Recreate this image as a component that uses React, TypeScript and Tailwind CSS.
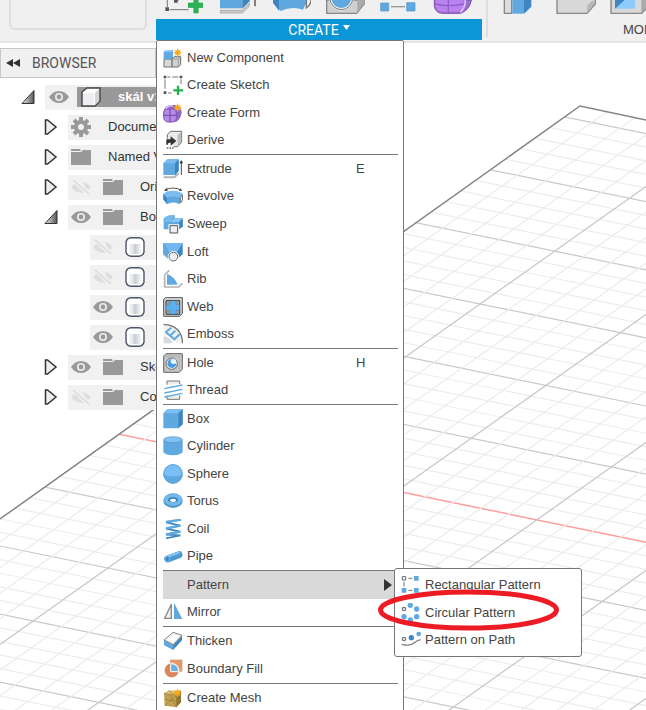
import type { ReactNode } from "react";

const outline = "#6f6f6f";
const blue = "#5fa9e0";
const deep = "#3d86c2";
const light = "#8ccbfa";

/* ---------- menu icons, drawn on a 60 unit grid ---------- */

function Icon({ children }: { children?: ReactNode }) {
  return (
    <svg className="size-5 shrink-0" viewBox="0 0 60 60" fill="none" aria-hidden="true">
      {children}
    </svg>
  );
}

function Spark({ x, y }: { x: number; y: number }) {
  return (
    <path
      transform={`translate(${x} ${y})`}
      d="M0-14 3-6 10-10 6-3 14 0 6 3 10 10 3 6 0 14-3 6-10 10-6 3-14 0-6-3-10-10-3-6Z"
      fill="#fba91a"
    />
  );
}

const icons: Record<string, ReactNode> = {
  component: (
    <>
      <path d="M3 33h24v24H3Z" fill="#d9d9d9" stroke={outline} strokeWidth="3" />
      <path d="M27 33 34 26h19v24l-7 7H27Z" fill="#d0d0d0" stroke={outline} strokeWidth="3" />
      <path d="M27 33h19v24M46 33l7-7" stroke="#8d8d8d" strokeWidth="2" />
      <path d="M2 12 8 6h22v22l-5 6H2Z" fill={blue} />
      <path d="M2 12 8 6h22l-5 6Z" fill={light} />
      <Spark x={44} y={14} />
    </>
  ),
  sketch: (
    <>
      <path d="M13 6h9m6 0h18M6 13v28M54 13v14M15 54h11" stroke="#777" strokeWidth="3" />
      <path d="M2 2h8v8H2zM50 2h8v8h-8zM2 49h8v8H2z" fill="#555" />
      <path d="M45 32v28M31 46h29" stroke="#22b14c" strokeWidth="7" />
    </>
  ),
  form: (
    <>
      <path d="M2 25Q4 9 22 6h14q20 6 20 22-2 20-16 28l-24 2Q2 52 2 40Z" fill="#8d68c4" />
      <path d="M2 28Q4 18 18 18h12q10 0 10 12v14q0 13-13 13H16Q2 56 2 42Z" fill="#b88be8" stroke="#8055b5" strokeWidth="3" />
      <path d="M21 18v39M2 37h38" stroke="#7d50b4" strokeWidth="4" />
      <path d="M8 17q8-11 22-8" stroke="#d9baf8" strokeWidth="5" />
      <Spark x={44} y={14} />
    </>
  ),
  derive: (
    <>
      <path d="M13 26V14L22 4h34v32L44 50H32" fill="#e9e9e9" stroke={outline} strokeWidth="3" />
      <path d="M44 15 55 5v31L44 49Z" fill="#bdbdbd" />
      <path d="M10 44V28h13v-9l17 14-17 14v-9h-5q-3 0-3 6Z" fill="#333" />
      <path d="M11 54h24" stroke="#666" strokeWidth="4" strokeDasharray="5 3" />
    </>
  ),
  extrude: (
    <>
      <path d="M2 55h32l13-12" stroke="#b5b5b5" strokeWidth="6" />
      <path d="M1 13 13 1h34v35L36 48H1Z" fill={blue} />
      <path d="M1 13 13 1h34L36 13Z" fill="#79baf0" />
      <path d="M36 13 47 1v35L36 48Z" fill={deep} />
      <path d="M55 48V6" stroke="#444" strokeWidth="3" />
      <path d="m49 13 6-10 5 10Z" fill="#333" />
    </>
  ),
  revolve: (
    <>
      <path d="M7 11Q30 1 55 12" stroke="#555" strokeWidth="3" />
      <path d="m3 14 9-9 2 11ZM58 15l-11-1 5-7Z" fill="#444" />
      <path d="M1 23Q29 6 59 23v17L47 54Q30 45 12 55L1 40Z" fill={blue} />
      <path d="M1 23Q29 6 59 23l-9 12q-20-9-39 0Z" fill="#7cbdf1" />
      <path d="m1 24 11 12v18L1 40Z" fill={deep} />
      <path d="M52 34q6-8 7-5v12q-4 8-8 11Z" fill="#eee" stroke="#666" strokeWidth="3" />
    </>
  ),
  sweep: (
    <>
      <path d="M2 14Q11 1 35 4l1 9h23v25L48 46H2Z" fill={blue} />
      <path d="M2 14Q11 1 35 4l-8 12-4 8H2Z" fill="#77b9ed" />
      <path d="M48 23 59 13v25l-11 8Z" fill={deep} />
      <path d="M23 24 35 13h24L48 24Z" fill="#8bc7f5" />
      <path d="M20 34h25v24H20Z" fill="#f3f3f3" stroke="#fff" strokeWidth="7" />
      <path d="M21 35h23v22H21Z" fill="#eee" stroke="#555" strokeWidth="3" />
    </>
  ),
  loft: (
    <>
      <path d="M1 3h58v34L44 50H15L1 37Z" fill={deep} />
      <path d="M1 3h58L43 30H17Z" fill="#72b7ef" />
      <path d="M1 3 17 30l-3 18L1 37Z" fill={blue} />
      <circle cx="31" cy="44" r="17" fill="#fff" />
      <circle cx="31" cy="44" r="13" fill="#f0f0f0" stroke="#666" strokeWidth="3" />
    </>
  ),
  rib: (
    <>
      <path d="M5 17 19 4M5 17v37h42l11-11" stroke="#b4b4b4" strokeWidth="5" />
      <path d="M12 14Q34 22 44 47H12Z" fill={blue} />
    </>
  ),
  web: (
    <>
      <path d="M2 7 8 1h50v48l-8 9H2Z" fill="#ccc" stroke="#555" strokeWidth="3" />
      <path d="M9 11h41v41H9Z" fill="#8ca6b8" stroke="#444" strokeWidth="3" />
      <path d="M23 12h13v13h13v13H36v13H23V38H10V25h13Z" fill="#58b0f0" />
      <path d="M20 14v8h-8m27-8v8h8M20 49v-8h-8m27 8v-8h8" stroke="#5d7f96" strokeWidth="2" />
    </>
  ),
  emboss: (
    <>
      <path d="M1 2Q55 5 59 58H41Q37 35 2 34Z" fill="#f1f1f1" />
      <path d="M1 1Q56 4 59 58" stroke="#777" strokeWidth="4" />
      <path d="m8 24 26 22 16-15M21 35l16-15M8 25l17-14" stroke={blue} strokeWidth="6" />
      <path d="M2 36q20 2 27 22H2Z" fill="#d9d9d9" />
    </>
  ),
  hole: (
    <>
      <path d="M2 9 9 2h49v46l-9 10H2Z" fill="#c4c4c4" stroke="#666" strokeWidth="3" />
      <path d="M2 9h47v49M49 9l9-7" stroke="#aaa" strokeWidth="2" />
      <circle cx="26" cy="32" r="17" fill="#f6f6f6" stroke="#666" strokeWidth="3" />
      <path d="M13 31a13 13 0 0 1 13-13l1 13 13 1A13 13 0 0 1 13 31Z" fill="#4a9de0" />
      <circle cx="31" cy="25" r="8" fill="#e2f2ff" />
    </>
  ),
  thread: (
    <>
      <path d="M12 14V3h38v9M12 47v11h38V46" fill="#eee" stroke="#777" strokeWidth="3" />
      <path d="m4 26 54-11M4 39l54-11M4 51l54-11" stroke={blue} strokeWidth="4" />
    </>
  ),
  box: (
    <>
      <path d="M1 13 13 1h46v45L46 58H1Z" fill={blue} />
      <path d="M1 13 13 1h46L46 13Z" fill="#7bbef2" />
      <path d="M46 13 59 1v45L46 58Z" fill={deep} />
    </>
  ),
  cylinder: (
    <>
      <path d="M1 11h58v37q-8 10-29 10T1 48Z" fill={blue} />
      <ellipse cx="30" cy="11" rx="28" ry="9" fill="#82c1f1" stroke="#5199d2" strokeWidth="2" />
    </>
  ),
  sphere: (
    <>
      <circle cx="30" cy="30" r="29" fill={blue} />
      <path d="M1 30a29 29 0 0 1 58 0Q30 45 1 30Z" fill="#7abff5" />
      <circle cx="30" cy="30" r="28" stroke="#4f9cd6" strokeWidth="2" />
    </>
  ),
  torus: (
    <>
      <ellipse cx="30" cy="29" rx="29" ry="22" fill="#4b97d1" />
      <ellipse cx="30" cy="26" rx="27" ry="18" fill="#75b9eb" />
      <ellipse cx="30" cy="26" rx="15" ry="8" fill={deep} />
      <ellipse cx="30" cy="28" rx="9" ry="5" fill="#fff" />
    </>
  ),
  coil: (
    <>
      <path d="M54 2 9 10l43 10L9 29l43 9L9 47l43 2-43 9" stroke="#3d86c2" strokeWidth="5" />
      <path d="M54 2 9 9M52 20 9 28M52 38 9 46" stroke={blue} strokeWidth="7" />
    </>
  ),
  pipe: (
    <>
      <path d="M14 39 48 26" stroke="#4b97d1" strokeWidth="21" strokeLinecap="round" />
      <path d="M16 31 47 20" stroke="#80c1f2" strokeWidth="8" strokeLinecap="round" />
      <ellipse cx="13" cy="39" rx="7" ry="8" fill={deep} stroke="#77b9e9" strokeWidth="3" />
    </>
  ),
  mirror: (
    <>
      <path d="M25 7v42H5Z" fill="#eee" stroke="#888" strokeWidth="4" />
      <path d="M33 2v49h25Z" fill={blue} />
    </>
  ),
  thicken: (
    <>
      <path d="M3 27v15l28 14 26-28V13L31 40Z" fill={deep} />
      <path d="M3 27v15l28 14V40Z" fill={blue} />
      <path d="M3 27 30 4l27 9-26 28Z" fill="#eee" stroke="#888" strokeWidth="3" />
      <path d="m12 27 19-17 16 5-17 19Z" fill="#fff" />
    </>
  ),
  boundary: (
    <>
      <path d="M21 2h37v36H21Z" fill="#e39768" />
      <circle cx="26" cy="34" r="22" fill="#d98558" stroke="#fff" strokeWidth="2" />
      <path d="M23 14q23 0 24 24H23Z" fill="#68afe2" stroke="#fff" strokeWidth="3" />
    </>
  ),
  mesh: (
    <>
      <path d="M3 16 16 8h38v34L40 58l-35-5Z" fill="#c1a252" />
      <path d="M3 16 16 8h38L40 23Z" fill="#dcc276" />
      <path d="M40 23 54 8v34L40 58Z" fill="#8e7430" />
      <path d="m3 16 37 7-35 30M4 34l36 6M20 19 40 58M16 8l24 15 13 13-13 4" stroke="#927836" strokeWidth="2" />
      <Spark x={43} y={15} />
    </>
  ),
  rectangular: (
    <>
      <path d="M22 10h12M22 46h12M9 20v15" stroke="#777" strokeWidth="3" />
      <path d="M4 5h10v10H4Z" fill="#fff" stroke="#666" strokeWidth="3" />
      <path d="M39 3h14v14H39zM2 39h14v14H2zM39 39h14v14H39z" fill={blue} />
    </>
  ),
  circular: (
    <>
      <circle cx="9" cy="18" r="5" fill="#fff" stroke="#777" strokeWidth="4" />
      <g fill={blue}>
        <circle cx="28" cy="7" r="8" />
        <circle cx="47" cy="18" r="8" />
        <circle cx="47" cy="41" r="8" />
        <circle cx="28" cy="51" r="8" />
        <circle cx="9" cy="41" r="8" />
      </g>
    </>
  ),
  path: (
    <>
      <circle cx="9" cy="27" r="5" fill="#fff" stroke="#777" strokeWidth="4" />
      <circle cx="31" cy="23" r="8" fill={deep} />
      <circle cx="53" cy="12" r="7" fill={blue} />
      <path d="M2 43q26 7 40-6 7-6 17-8" stroke="#888" strokeWidth="4" />
    </>
  ),
};

/* ---------- toolbar icons: only their lower edge shows ---------- */

const createTools: { name: string; art: ReactNode }[] = [
  {
    name: "Create Sketch",
    art: (
      <>
        <path d="M13 0v21M20 29h57M36 4 47 0" stroke="#777" strokeWidth="3" />
        <path d="M7 22h11v11H7zM33 0h11v8H33z" fill="#555" />
        <path d="M99 0v40M75 16h51" stroke="#1fa04a" strokeWidth="15" />
        <path d="M99 0v38M77 16h47" stroke="#2cb556" strokeWidth="11" />
      </>
    ),
  },
  {
    name: "Extrude",
    art: (
      <>
        <path d="M10 31h66l21-22v10L76 39H10Z" fill="#ccc" stroke="#999" strokeWidth="2" />
        <path d="M9 0h67v25H9Z" fill={blue} />
        <path d="M76 0h22v4L76 26Z" fill={deep} />
        <path d="M114 0v19" stroke="#444" strokeWidth="4" />
      </>
    ),
  },
  {
    name: "Revolve",
    art: (
      <>
        <path d="M6 0h100v8L96 29Q64 17 28 33L6 8Z" fill={blue} />
        <path d="M6 0h18v32L6 8Z" fill={deep} />
        <path d="M106 0v24q14-10 14-24" fill="#eee" stroke="#777" strokeWidth="4" />
      </>
    ),
  },
  {
    name: "Hole",
    art: (
      <>
        <path d="M5 0v40h90l25-31V0Z" fill="#cfcfcf" stroke="#888" strokeWidth="4" />
        <path d="M97 0h22v8L97 38Z" fill="#aaa" />
        <circle cx="49" cy="-5" r="33" fill={blue} stroke="#eee" strokeWidth="8" />
        <circle cx="49" cy="-5" r="34" stroke="#777" strokeWidth="3" />
      </>
    ),
  },
  {
    name: "Rectangular Pattern",
    art: (
      <>
        <path d="M36 20h42" stroke="#999" strokeWidth="4" />
        <path d="M5 9h24v24H5zM83 8h25v25H83z" fill={blue} stroke="#4c94cd" strokeWidth="2" />
      </>
    ),
  },
  {
    name: "Create Form",
    art: (
      <>
        <path d="M4 0v18q4 22 24 22h55q27-10 32-40Z" fill="#9d6ed0" stroke="#7950ae" strokeWidth="3" />
        <path d="M7 0v17q4 17 20 18h48q16-3 17-20V0Z" fill="#b982ec" />
        <path d="M7 12q40 10 85 0M46 0v35" stroke="#8e5ecb" strokeWidth="4" />
        <path d="M97 0q0 24-15 37" stroke="#dfc4fa" strokeWidth="5" />
      </>
    ),
  },
];

const modifyTools: { name: string; art: ReactNode }[] = [
  {
    name: "Press Pull",
    art: (
      <>
        <path d="M7 0v40h22V0" fill="#ddd" stroke="#888" strokeWidth="4" />
        <path d="M31 0h35v41H31Z" fill={blue} />
        <path d="M66 0h22v20L66 41Z" fill={deep} />
      </>
    ),
  },
  {
    name: "Fillet",
    art: (
      <>
        <path d="M3 0v40h90l25-28V0" fill="#d8d8d8" stroke="#888" strokeWidth="4" />
        <path d="M93 38V22q4-15 23-22v11Z" fill="#b8b8b8" />
      </>
    ),
  },
  {
    name: "Shell",
    art: (
      <>
        <path d="M3 0v40h92l25-26V0" fill="#d8d8d8" stroke="#888" strokeWidth="4" />
        <path d="M15 0h60v26H15Z" fill={light} />
        <path d="M15 0h29L15 26Z" fill={deep} />
        <path d="M94 38V0h24v13Z" fill="#aaa" />
      </>
    ),
  },
];

function Tools({ tools }: { tools: { name: string; art: ReactNode }[] }) {
  return (
    <div className="mb-[5px] flex h-[14px]">
      {tools.map((tool) => (
        <button key={tool.name} type="button" aria-label={tool.name} className="flex w-[54px] shrink-0 justify-center">
          <svg className="h-[14px] w-10" viewBox="0 0 120 42" fill="none" aria-hidden="true">
            {tool.art}
          </svg>
        </button>
      ))}
    </div>
  );
}

/* ---------- CREATE menu ---------- */

type Item = { label: string; icon?: string; shortcut?: string; submenu?: boolean };

const groups: { height: string; items: Item[] }[] = [
  {
    height: "h-[110px]",
    items: [
      { label: "New Component", icon: "component" },
      { label: "Create Sketch", icon: "sketch" },
      { label: "Create Form", icon: "form" },
      { label: "Derive", icon: "derive" },
    ],
  },
  {
    height: "h-[194px]",
    items: [
      { label: "Extrude", icon: "extrude", shortcut: "E" },
      { label: "Revolve", icon: "revolve" },
      { label: "Sweep", icon: "sweep" },
      { label: "Loft", icon: "loft" },
      { label: "Rib", icon: "rib" },
      { label: "Web", icon: "web" },
      { label: "Emboss", icon: "emboss" },
    ],
  },
  {
    height: "h-14",
    items: [
      { label: "Hole", icon: "hole", shortcut: "H" },
      { label: "Thread", icon: "thread" },
    ],
  },
  {
    height: "h-[166px]",
    items: [
      { label: "Box", icon: "box" },
      { label: "Cylinder", icon: "cylinder" },
      { label: "Sphere", icon: "sphere" },
      { label: "Torus", icon: "torus" },
      { label: "Coil", icon: "coil" },
      { label: "Pipe", icon: "pipe" },
    ],
  },
  {
    height: "h-14",
    items: [
      { label: "Pattern", submenu: true },
      { label: "Mirror", icon: "mirror" },
    ],
  },
  {
    height: "h-[57px]",
    items: [
      { label: "Thicken", icon: "thicken" },
      { label: "Boundary Fill", icon: "boundary" },
    ],
  },
  { height: "h-7", items: [{ label: "Create Mesh", icon: "mesh" }] },
];

const patterns: Item[] = [
  { label: "Rectangular Pattern", icon: "rectangular" },
  { label: "Circular Pattern", icon: "circular" },
  { label: "Pattern on Path", icon: "path" },
];

function PatternMenu() {
  return (
    <div className="absolute -top-[3px] left-[231px] flex h-[89px] w-[188px] flex-col rounded-[3px] border border-[#777] bg-white py-[2px] pl-[6px]">
      {patterns.map((item) => (
        <button key={item.label} type="button" className="flex w-full flex-1 items-center gap-1 whitespace-nowrap">
          <Icon>{icons[item.icon!]}</Icon>
          <span>{item.label}</span>
        </button>
      ))}
      <svg className="pointer-events-none absolute -left-[17px] top-[20px] h-[42px] w-[181px]" viewBox="0 0 181 42" fill="none" aria-hidden="true">
        <ellipse cx="90.5" cy="21" rx="88" ry="18" stroke="#ed1c24" strokeWidth="5" />
      </svg>
    </div>
  );
}

function MenuRow({ item }: { item: Item }) {
  return (
    <div className="relative flex min-h-0 flex-1">
      <button
        type="button"
        className={`flex flex-1 items-center gap-1 text-left ${item.submenu ? "bg-[#d9d9d9]" : ""}`}
      >
        <Icon>{item.icon && icons[item.icon]}</Icon>
        <span className="flex-1">{item.label}</span>
        {item.shortcut && <span className="w-[42px]">{item.shortcut}</span>}
        {item.submenu && (
          <svg className="mr-[6px] h-3 w-2" viewBox="0 0 8 12" aria-hidden="true">
            <path d="M0 0 8 6 0 12Z" fill="#333" />
          </svg>
        )}
      </button>
      {item.submenu && <PatternMenu />}
    </div>
  );
}

function CreateMenu() {
  return (
    <div className="absolute left-0 top-full w-[248px] rounded-t-[2px] border border-[#777] bg-white pl-[6px] pr-[5px] pt-[3px] text-[13px] text-[#444]">
      {groups.map((group, i) => (
        <div key={i} className={`flex flex-col ${group.height} ${i > 0 ? "border-t border-[#777]" : ""}`}>
          {group.items.map((item) => (
            <MenuRow key={item.label} item={item} />
          ))}
        </div>
      ))}
    </div>
  );
}

/* ---------- browser tree ---------- */

function Arrow({ open }: { open: boolean }) {
  return (
    <svg className="h-4 w-[14px] shrink-0" viewBox="0 0 14 16" aria-hidden="true">
      <defs>
        <linearGradient id="fold" x1="0" x2="1">
          <stop offset="0" stopColor="#eee" />
          <stop offset="1" stopColor="#555" />
        </linearGradient>
      </defs>
      {open ? (
        <path d="M13 1.500V14.500H1Z" fill="url(#fold)" stroke="#333" />
      ) : (
        <path d="M1.500 1v14h2L12 8 3.500 1Z" fill="#eee" stroke="#333" strokeWidth="1.500" />
      )}
    </svg>
  );
}

function Eye({ on }: { on: boolean }) {
  return (
    <svg className="h-4 w-5 shrink-0" viewBox="0 0 20 16" fill="none" aria-hidden="true">
      {on ? (
        <>
          <path d="M0 8Q4 2 10 2T20 8Q16 14 10 14T0 8Z" fill="#999" />
          <circle cx="10" cy="8" r="3.200" fill="#999" stroke="#eee" strokeWidth="1.600" />
        </>
      ) : (
        <>
          <path d="M0 8Q4 3 9 2.500L14 13.500Q5 15 0 8ZM12 3q5 1 8 5-2 3-5 5Z" fill="#dedede" />
          <path d="M3 1 18 15" stroke="#f1f1f1" strokeWidth="5" />
          <path d="M2 1 18 15" stroke="#dadada" strokeWidth="1.500" />
        </>
      )}
    </svg>
  );
}

function Glyph({ kind }: { kind: string }) {
  return (
    <svg className="size-5 shrink-0" viewBox="0 0 20 20" fill="none" aria-hidden="true">
      <defs>
        <linearGradient id="body" x1="0" x2="1">
          <stop offset="0" stopColor="#f4f5f7" />
          <stop offset="0.300" stopColor="#e3e6ea" />
          <stop offset="0.450" stopColor="#c6cad2" />
          <stop offset="1" stopColor="#fff" />
        </linearGradient>
      </defs>
      {kind === "folder" && (
        <>
          <path d="M0 2h9l1 2H0Z" fill="#999" />
          <path d="M0 5h10l2-2h8v15H0Z" fill="#999" />
        </>
      )}
      {kind === "gear" && (
        <>
          <g stroke="#999" strokeWidth="4">
            <path d="M10 0v20M0 10h20M3 3l14 14M17 3 3 17" />
          </g>
          <circle cx="10" cy="10" r="7" fill="#999" />
          <circle cx="10" cy="10" r="3" fill="#f1f1f1" />
        </>
      )}
      {kind === "body" && (
        <>
          <path
            d="M1 5Q2 1 6 .800h8Q18 1 19 5v10q-1 4-5 4.200H6Q2 19 1 15Z"
            fill="#fff"
            stroke="#4d5567"
            strokeWidth="1.400"
          />
          <path d="M4 7h13v9q-1 1-3 1H6q-2 0-2-2Z" fill="url(#body)" />
        </>
      )}
      {kind === "cube" && (
        <>
          <path d="M1 5 6 1h13v13l-5 5H1Z" fill="#fff" stroke="#4a4a4a" strokeWidth="1.500" />
          <path d="M2 6h11v12H2Z" fill="#eceef1" />
          <path d="M14 6 18 2v12l-4 4Z" fill="#d0d3d8" />
        </>
      )}
    </svg>
  );
}

type Node = { level: 1 | 2 | 3; open?: boolean; eye?: boolean; glyph: string; label?: string };

const nodes: Node[] = [
  { level: 1, open: true, eye: true, glyph: "cube", label: "skál v1" },
  { level: 2, open: false, glyph: "gear", label: "Document" },
  { level: 2, open: false, glyph: "folder", label: "Named Views" },
  { level: 2, open: false, eye: false, glyph: "folder", label: "Origin" },
  { level: 2, open: true, eye: true, glyph: "folder", label: "Bodies" },
  { level: 3, eye: false, glyph: "body" },
  { level: 3, eye: false, glyph: "body" },
  { level: 3, eye: true, glyph: "body" },
  { level: 3, eye: true, glyph: "body" },
  { level: 2, open: false, eye: true, glyph: "folder", label: "Sketches" },
  { level: 2, open: false, eye: false, glyph: "folder", label: "Construction" },
];

const indent = { 1: "pl-[21px]", 2: "pl-[44px]", 3: "pl-[90px]" };

function TreeRow({ node }: { node: Node }) {
  const root = node.level === 1;
  return (
    <li className={`flex h-[30px] items-center gap-[10px] ${indent[node.level]}`}>
      {node.open !== undefined && (
        <button type="button" aria-label="Expand" aria-expanded={node.open}>
          <Arrow open={node.open} />
        </button>
      )}
      <div className={`flex h-[25px] flex-1 items-center bg-[#f1f1f1] ${root ? "pl-1" : "pl-[3px]"}`}>
        {node.eye !== undefined && (
          <button type="button" aria-label="Visibility" className={root ? "mr-2" : "mr-3"}>
            <Eye on={node.eye} />
          </button>
        )}
        <div
          className={`flex flex-1 items-center gap-[17px] whitespace-nowrap ${
            root ? "h-5 bg-[#999] pl-1 font-bold text-white" : "text-[#333]"
          }`}
        >
          <Glyph kind={node.glyph} />
          {node.label && <span>{node.label}</span>}
        </div>
      </div>
    </li>
  );
}

function Browser() {
  return (
    <aside className="relative mt-[5px] w-[156px] overflow-hidden">
      <h2 className="flex h-[30px] items-center gap-3 border border-[#c6c6c6] bg-[#f0f0f0] pl-[5px] font-[Roboto,sans-serif] text-[14px] text-[#555]">
        <svg className="h-2 w-[14px]" viewBox="0 0 14 8" aria-hidden="true">
          <path d="M7 0v8L0 4ZM14 0v8L7 4Z" fill="#333" />
        </svg>
        BROWSER
      </h2>
      <ul className="pt-1">
        {nodes.map((node, i) => (
          <TreeRow key={i} node={node} />
        ))}
      </ul>
    </aside>
  );
}

/* ---------- modelling canvas ---------- */

function Canvas() {
  const rows = Array.from({ length: 64 }, (_, i) => i);
  return (
    <svg className="absolute left-0 top-0 h-[710px] w-[646px]" viewBox="0 0 646 710" fill="none" aria-hidden="true">
      <defs>
        <clipPath id="floor">
          <path d="M580 106 646 120V710H0V519Z" />
        </clipPath>
      </defs>
      <g clipPath="url(#floor)">
        {rows.map((i) => {
          const y = 84 + i * 13.62;
          const red = i === 30;
          const major = i % 5 === 0;
          return (
            <path
              key={`a${i}`}
              d={`M0 ${y - 404 * 0.205}L646 ${y + 242 * 0.205}`}
              stroke={red ? "#ff9c9c" : major ? "#c9c9c9" : "#ededed"}
              strokeWidth={red ? 1.5 : 1.2}
            />
          );
        })}
        {rows.slice(0, 44).map((i) => {
          const y = 230 + i * 25.6;
          return (
            <path
              key={`b${i}`}
              d={`M0 ${y + 404 * 0.709}L646 ${y - 242 * 0.709}`}
              stroke={i % 5 === 0 ? "#c6c6c6" : "#ebebeb"}
              strokeWidth="1.200"
            />
          );
        })}
      </g>
      <path d="M0 519 580 106 646 120" stroke="#858585" strokeWidth="1.500" />
    </svg>
  );
}

export default function App() {
  return (
    <main className="relative h-screen overflow-hidden bg-white font-['Liberation_Sans',Arial,sans-serif] text-[13px] leading-5">
      <Canvas />
      <header className="relative z-10 flex h-[43px] border-b-2 border-[#e6e6e6] bg-[#f0f0f0]">
        <div className="ml-[9px] mr-[9px] h-[30px] w-[138px] shrink-0 rounded-b-[6px] border-2 border-t-0 border-[#dedede]" />
        <section className="relative h-10 w-[326px] shrink-0">
          <Tools tools={createTools} />
          <button type="button" className="flex h-[21px] w-full items-center justify-center gap-1 bg-[#0b96d8] font-[Roboto,sans-serif] text-[14px] text-white">
            CREATE
            <svg className="mb-1 h-[5px] w-[7px]" viewBox="0 0 7 5" aria-hidden="true">
              <path d="M0 0h7L3.500 5Z" fill="#fff" />
            </svg>
          </button>
          <CreateMenu />
        </section>
        <div className="ml-1 h-[37px] w-[2px] shrink-0 bg-[#dedede]" />
        <section className="min-w-0 flex-1 overflow-hidden pl-[7px]">
          <Tools tools={modifyTools} />
          <button type="button" className="ml-[128px] flex h-[21px] items-center text-[#444]">
            MODIFY
          </button>
        </section>
      </header>
      <Browser />
    </main>
  );
}
